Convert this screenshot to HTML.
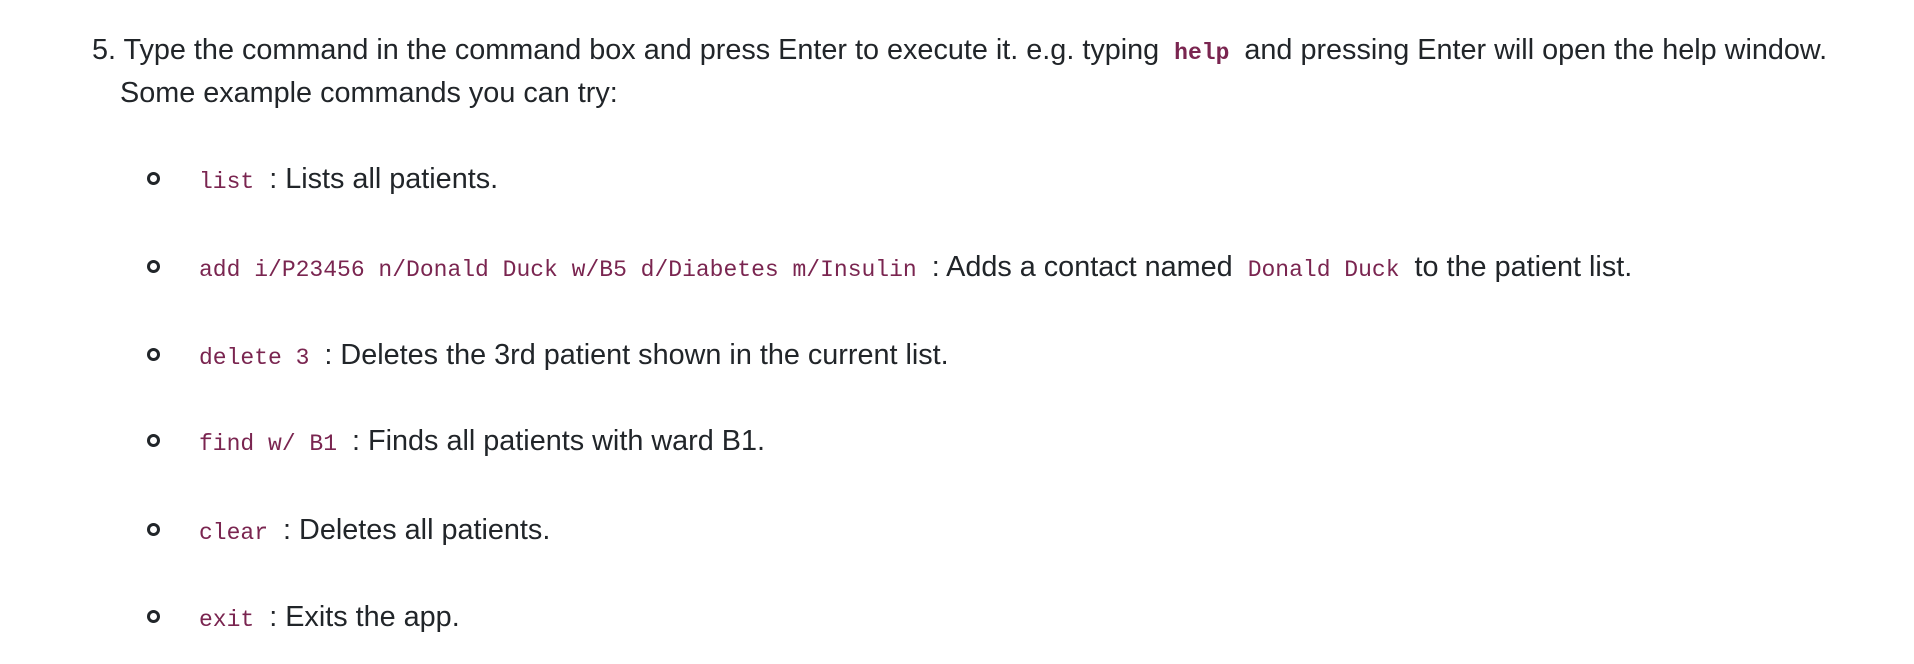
<!DOCTYPE html>
<html><head><meta charset="utf-8"><style>
body{margin:0;width:1914px;height:664px;background:#fff;position:relative;overflow:hidden;font-family:"Liberation Sans",sans-serif;font-size:28.8px;color:#212529;letter-spacing:0}
.l{position:absolute;white-space:nowrap;line-height:30px}
code{font-family:"Liberation Mono",monospace;font-size:23px;color:#7a2550;padding:0 7px;letter-spacing:0}
code.b{font-weight:bold}
.bul{position:absolute;width:13px;height:13px;border:3px solid #212529;border-radius:50%;box-sizing:border-box}
</style></head><body>
<div class="l" style="left:92px;top:35px">5. Type the command in the command box and press Enter to execute it. e.g. typing <code class="b">help</code> and pressing Enter will open the help window.</div>
<div class="l" style="left:120px;top:78px">Some example commands you can try:</div>

<div class="bul" style="left:147px;top:172px"></div>
<div class="l" style="left:192px;top:164px"><code>list</code> : Lists all patients.</div>

<div class="bul" style="left:147px;top:260px"></div>
<div class="l" style="left:192px;top:252px"><code>add i/P23456 n/Donald Duck w/B5 d/Diabetes m/Insulin</code> : Adds a contact named <code>Donald Duck</code> to the patient list.</div>

<div class="bul" style="left:147px;top:348px"></div>
<div class="l" style="left:192px;top:340px"><code>delete 3</code> : Deletes the 3rd patient shown in the current list.</div>

<div class="bul" style="left:147px;top:434px"></div>
<div class="l" style="left:192px;top:426px"><code>find w/ B1</code> : Finds all patients with ward B1.</div>

<div class="bul" style="left:147px;top:523px"></div>
<div class="l" style="left:192px;top:515px"><code>clear</code> : Deletes all patients.</div>

<div class="bul" style="left:147px;top:610px"></div>
<div class="l" style="left:192px;top:602px"><code>exit</code> : Exits the app.</div>
</body></html>
